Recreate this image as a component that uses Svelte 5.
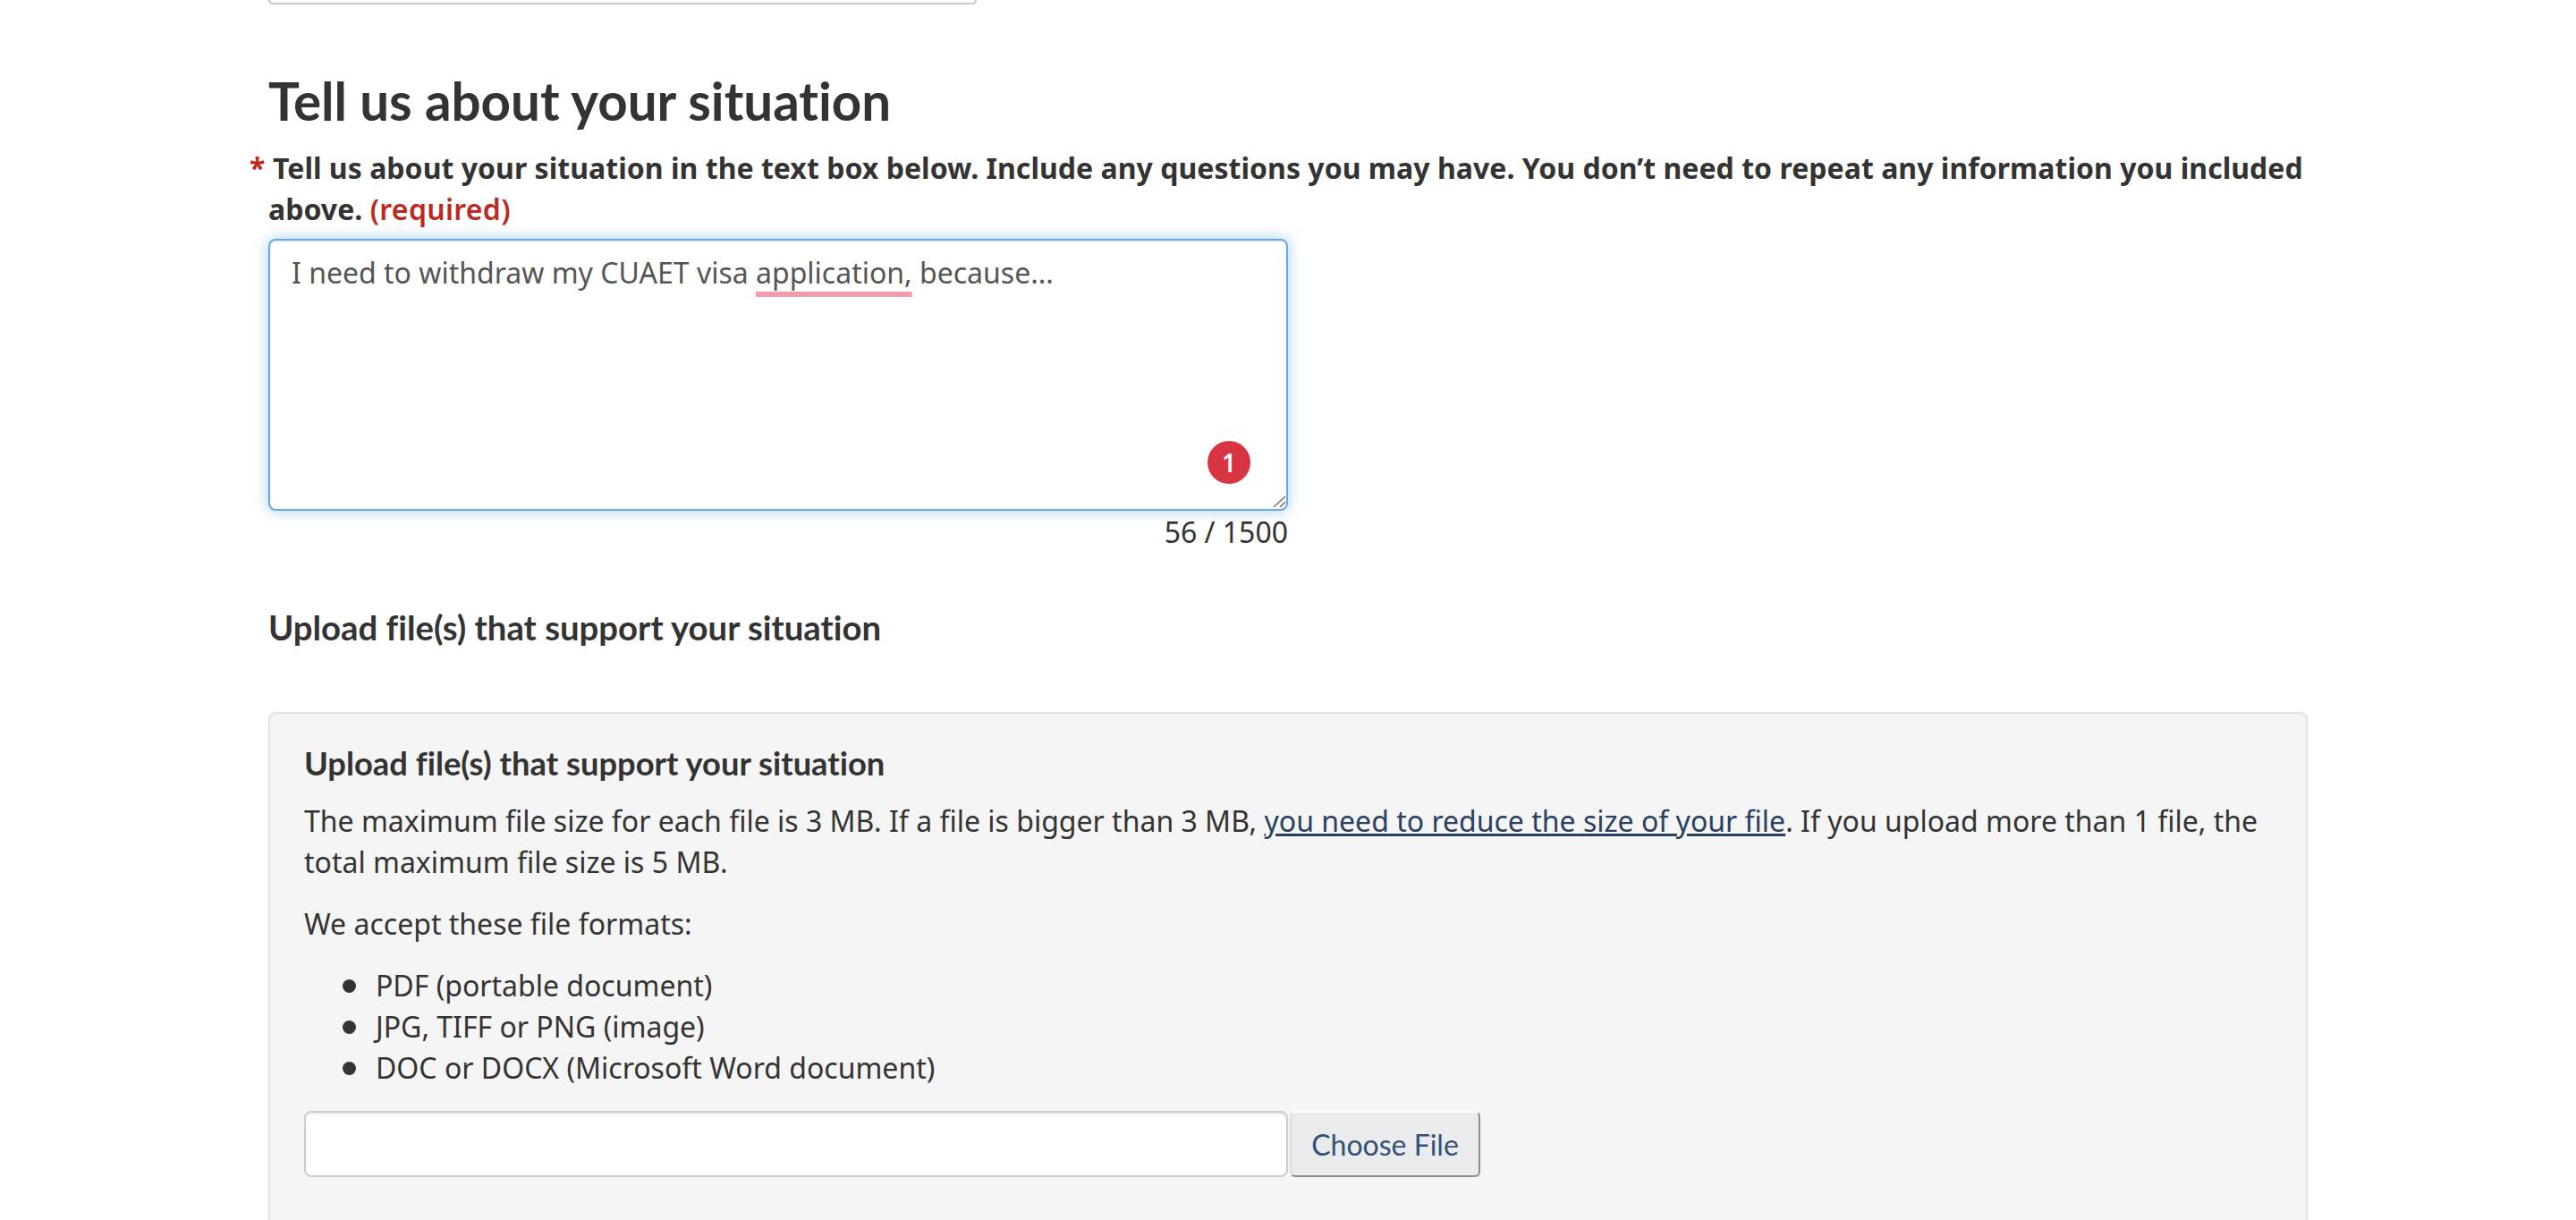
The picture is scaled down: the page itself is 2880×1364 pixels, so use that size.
<script>
	let count = 56
	const max = 1500
	const formats = ['PDF (portable document)', 'JPG, TIFF or PNG (image)', 'DOC or DOCX (Microsoft Word document)']
</script>

<main class="page">
	<div class="prevField"></div>

	<h2>Tell us about your situation</h2>

	<p class="fieldLabel">
		<span class="star">*</span>
		Tell us about your situation in the text box below. Include any questions you may have. You don’t need to repeat any information you included above. <strong class="req">(required)</strong>
	</p>

	<div class="textBox">
		I need to withdraw my CUAET visa <span class="misspelled">application,</span> because...
		<span class="badge">1</span>
		<svg class="grip" width="16" height="16" viewBox="0 0 16 16">
			<path d="M2 14 L15 2 M9 14 L15 8" stroke="#777" stroke-width="1.6" fill="none" />
		</svg>
	</div>
	<div class="counter">{count} / {max}</div>

	<h3>Upload file(s) that support your situation</h3>

	<section class="well">
		<h4>Upload file(s) that support your situation</h4>
		<p>The maximum file size for each file is 3 MB. If a file is bigger than 3 MB, <a href="#reduce">you need to reduce the size of your file</a>. If you upload more than 1 file, the total maximum file size is 5 MB.</p>
		<p>We accept these file formats:</p>
		<ul>
			{#each formats as f}
				<li>{f}</li>
			{/each}
		</ul>
		<div class="fileRow">
			<div class="fileInput"></div>
			<button type="button" class="fileBtn">Choose File</button>
		</div>
	</section>
</main>

<style>
	:global(body) {
		background: #fff;
		overflow: hidden;
	}

	.page {
		height: 1364px;
		overflow: hidden;
		padding-left: 300px;
		width: 2280px;
		box-sizing: content-box;
		font-family: "Noto Sans", sans-serif;
		font-size: 32px;
		line-height: 46px;
		color: #333;
	}

	.prevField {
		width: 792px;
		height: 5px;
		box-sizing: border-box;
		border: 2px solid #c8c8c8;
		border-top: 0;
		border-radius: 0 0 8px 8px;
	}

	h2, h3, h4 {
		font-family: Lato, sans-serif;
		font-variant-ligatures: none;
		font-weight: 700;
	}

	h2 {
		font-size: 58.3px;
		line-height: 66px;
		margin: 74px 0 0;
	}

	.fieldLabel {
		position: relative;
		font-weight: 700;
		margin: 20px 0 10px;
		width: 2290px;
		text-indent: 5px;
		letter-spacing: 0.03px;
	}

	.star {
		position: absolute;
		left: -26px;
		color: #bc2a1f;
	}

	.req {
		color: #bc2a1f;
		font-weight: 600;
		letter-spacing: 0.3px;
	}

	.textBox {
		position: relative;
		width: 1140px;
		height: 304px;
		box-sizing: border-box;
		padding: 13px 24px;
		border: 2px solid #66a8e6;
		border-radius: 8px;
		box-shadow: inset 0 2px 2px rgba(0, 0, 0, 0.075), 0 0 16px rgba(102, 175, 233, 0.6);
		color: #555;
	}

	.misspelled {
		text-decoration: underline 6px #f29dac;
		text-underline-offset: 9px;
		text-decoration-skip-ink: none;
	}

	.badge {
		position: absolute;
		right: 40px;
		bottom: 28px;
		width: 48px;
		height: 48px;
		border-radius: 50%;
		background: #d93442;
		color: #fff;
		font-size: 28px;
		font-weight: 600;
		line-height: 48px;
		text-align: center;
	}

	.grip {
		position: absolute;
		right: 0;
		bottom: 0;
	}

	.counter {
		width: 1140px;
		text-align: right;
		margin-top: 1px;
	}

	h3 {
		font-size: 38.3px;
		line-height: 42px;
		margin: 62px 0 0;
	}

	.well {
		width: 2280px;
		height: 600px;
		box-sizing: border-box;
		margin-top: 74px;
		padding: 35px 38px;
		background: #f5f5f5;
		border: 2px solid #e3e3e3;
		border-radius: 8px;
	}

	h4 {
		font-size: 36.3px;
		line-height: 40px;
		margin: 0 0 22px;
	}

	.well p {
		margin: 0 0 23px;
	}

	ul {
		list-style: none;
		margin: 0;
		padding-left: 80px;
	}

	li {
		position: relative;
	}

	li::before {
		content: '';
		position: absolute;
		left: -37px;
		top: 16px;
		width: 15px;
		height: 15px;
		border-radius: 50%;
		background: #333;
	}

	.well a {
		color: #284162;
	}

	.fileRow {
		display: flex;
		align-items: flex-start;
		margin-top: 25px;
		gap: 2px;
	}

	.fileInput {
		width: 1100px;
		height: 74px;
		box-sizing: border-box;
		background: #fff;
		border: 2px solid #ccc;
		border-radius: 8px;
		box-shadow: inset 0 2px 2px rgba(0, 0, 0, 0.075);
	}

	.fileBtn {
		width: 213px;
		height: 74px;
		padding: 0;
		font-family: Lato, sans-serif;
		font-size: 32px;
		color: #335075;
		background: #eaebed;
		border: 2px solid #dcdee1;
		border-top-color: #fff;
		border-bottom-color: #8d8d8d;
		border-right-color: #8d8d8d;
		border-radius: 6px;
	}
</style>
